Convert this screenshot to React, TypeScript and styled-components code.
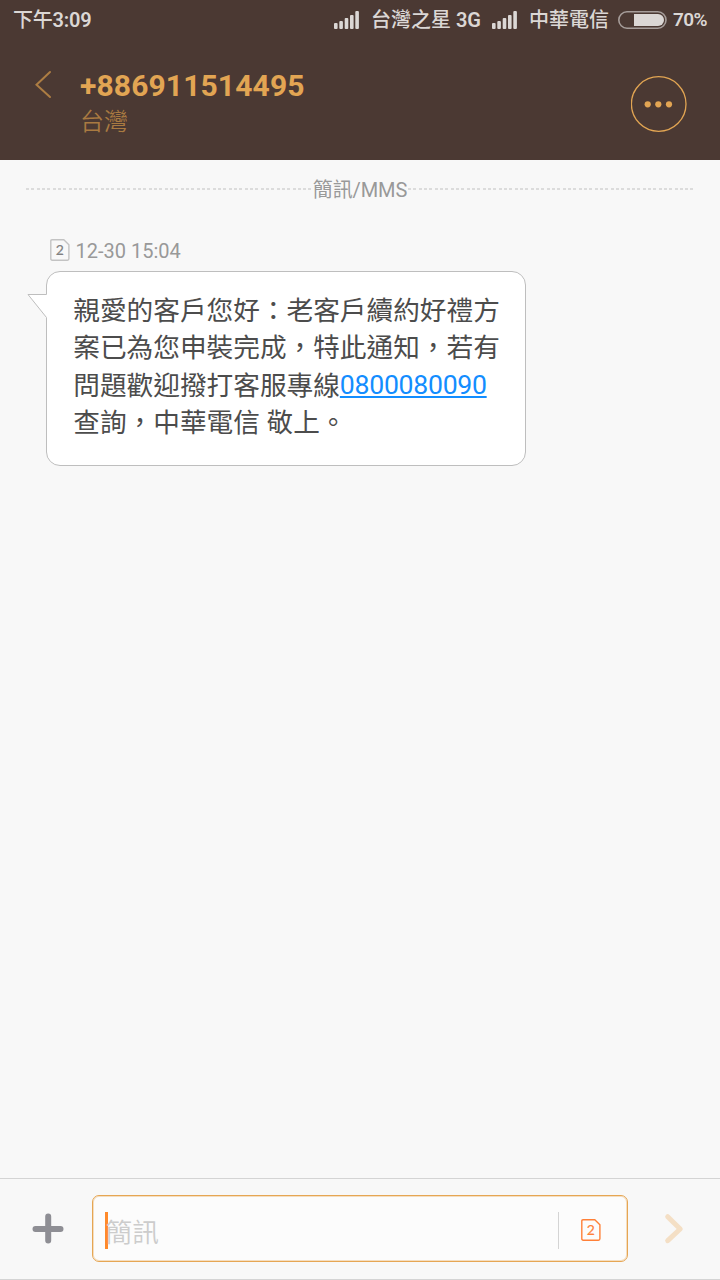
import React from "react";
import styled, { createGlobalStyle } from "styled-components";

const GlobalStyle = createGlobalStyle`
  * { box-sizing: border-box; }
  body {
    margin: 0;
    background: #f8f8f8;
    font-family: Roboto, "Noto Sans CJK TC", sans-serif;
  }
  svg { display: block; flex: none; }
`;

const Screen = styled.div`
  width: 720px;
  height: 1280px;
  display: flex;
  flex-direction: column;
  background: #f8f8f8;
  overflow: hidden;
`;

const Top = styled.header`
  height: 160px;
  background: #4b3933;
`;

const StatusBar = styled.div`
  height: 40px;
  display: flex;
  align-items: center;
  padding: 0 12px 0 13px;
  color: #dbd7d5;
  font-size: 20px;
  font-weight: 500;
  line-height: 38px;
  white-space: nowrap;
`;

const Latin = styled.span`
  font-weight: 600;
  letter-spacing: -0.2px;
`;

const Clock = styled.span`
  margin-right: auto;
  letter-spacing: -0.2px;
`;

const Carrier = styled.span<{ $width: number; $gap: number }>`
  width: ${(p) => p.$width}px;
  margin: 0 ${(p) => p.$gap}px 0 11px;
`;

const Percent = styled.span`
  width: 35px;
  margin-left: 6px;
  font-size: 19px;
  font-weight: 600;
  letter-spacing: -0.6px;
  line-height: 40px;
`;

const TitleBar = styled.div`
  height: 120px;
  display: flex;
  align-items: flex-start;
  padding: 0 33.5px 0 34px;
`;

const IconButton = styled.button<{ $top: number; $left?: number }>`
  margin: ${(p) => p.$top}px 0 0 ${(p) => p.$left ?? 0}px;
  padding: 0;
  border: 0;
  background: none;
`;

const Contact = styled.div`
  flex: 1;
  margin: 28px 0 0 28px;
  white-space: nowrap;
`;

const Phone = styled.h1`
  margin: 0;
  height: 36px;
  color: #e2a553;
  font-size: 30px;
  font-weight: 700;
  letter-spacing: 0.13px;
  line-height: 36px;
`;

const Region = styled.div`
  color: #a97a41;
  font-size: 24px;
  font-weight: 350;
  line-height: 36px;
`;

const Thread = styled.main`
  flex: 1;
  padding: 12px 27px 0 26px;
`;

const Divider = styled.div`
  height: 34px;
  display: flex;
  align-items: center;
  color: #999;
  font-size: 20px;
  line-height: 34px;
  white-space: nowrap;
`;

const DividerLabel = styled.span`
  flex: 1;
  padding-top: 2px;
  text-align: center;
  letter-spacing: -0.1px;
`;

const Dashes = styled.i<{ $width: number }>`
  width: ${(p) => p.$width}px;
  height: 2px;
  background: repeating-linear-gradient(90deg, #dcdcdc 0 3px, transparent 3px 5.33px);
`;

const Meta = styled.div`
  display: flex;
  align-items: center;
  height: 24px;
  margin: 32px 0 0 24px;
  color: #999;
  font-size: 20px;
`;

const Stamp = styled.time`
  margin-left: 5.5px;
  padding-top: 2px;
`;

const Bubble = styled.article`
  position: relative;
  width: 480px;
  height: 195px;
  margin: 9px 0 0 20px;
  padding: 21px 0 0 26.3px;
  border: 1px solid #bebebe;
  border-radius: 14px;
  background: #fff;
  color: #4c4c4c;
  font-size: 26.67px;
  line-height: 37.33px;
  white-space: nowrap;
`;

const Tail = styled.svg`
  position: absolute;
  left: -20px;
  top: 21px;
`;

const Line = styled.div`
  height: 37.33px;
`;

const PhoneLink = styled.a`
  color: #138dff;
  letter-spacing: -0.3px;
  line-height: 1;
  vertical-align: 1px;
  text-decoration: underline;
  text-decoration-thickness: 2px;
  text-underline-offset: 2px;
`;

const Composer = styled.footer`
  height: 102px;
  display: flex;
  align-items: flex-start;
  padding: 17px 0 0 32px;
  border-top: 1px solid #d4d4d4;
  border-bottom: 1px solid #d4d4d4;
`;

const Field = styled.div`
  width: 536px;
  height: 67px;
  margin: -1px 0 0 28px;
  display: flex;
  align-items: center;
  padding: 3px 26px 0 12px;
  border: 1px solid #e6a653;
  border-radius: 7px;
  background: #fcfcfc;
  box-shadow: inset 0 0 0 1px rgba(230, 166, 83, 0.35);
`;

const Caret = styled.i`
  width: 3px;
  height: 37px;
  background: #ff8a2b;
`;

const Placeholder = styled.span`
  flex: 1;
  margin: 5px 0 0 -2.5px;
  color: #ccc;
  font-size: 26.67px;
  font-weight: 350;
  line-height: 36px;
`;

const Separator = styled.i`
  width: 1px;
  height: 37px;
  margin-right: 22px;
  background: #d4d4d4;
`;

const Signal = () => (
  <svg width="26" height="18" viewBox="0 0 26 18" fill="#dbd7d5">
    <rect x="0" y="12" width="3.6" height="6" rx="1" />
    <rect x="5.3" y="10" width="3.6" height="8" rx="1" />
    <rect x="10.7" y="7" width="3.6" height="11" rx="1" />
    <rect x="16" y="4" width="3.6" height="14" rx="1" />
    <rect x="21.3" y="0" width="3.6" height="18" rx="1" />
  </svg>
);

const Battery = () => (
  <svg width="49" height="18" viewBox="0 0 49 18">
    <rect x=".8" y=".8" width="47.2" height="16.4" rx="8.2" fill="none" stroke="#a59c99" strokeWidth="1.6" />
    <path d="M16 3H40a6 6 0 0 1 0 12H16Z" fill="#dbd7d5" />
  </svg>
);

const SimIcon = ({ stroke, ink }: { stroke: string; ink: string }) => (
  <svg width="20" height="22" viewBox="0 0 20 22">
    <path
      d="M2 .8H13.8L18.9 5.8V19.8Q18.9 21.2 17.5 21.2H2.2Q.8 21.2 .8 19.8V2Q.8 .8 2 .8Z"
      fill="none"
      stroke={stroke}
      strokeWidth="1.4"
    />
    <text x="9.7" y="16" textAnchor="middle" fontFamily="Lato, sans-serif" fontSize="14" fontWeight="400" fill={ink} stroke={ink} strokeWidth=".15">
      2
    </text>
  </svg>
);

export default function App() {
  return (
    <>
      <GlobalStyle />
      <Screen>
        <Top>
          <StatusBar>
            <Clock>
              下午<Latin>3:09</Latin>
            </Clock>
            <Signal />
            <Carrier $width={109} $gap={12}>
              台灣之星 <Latin>3G</Latin>
            </Carrier>
            <Signal />
            <Carrier $width={79} $gap={10}>中華電信</Carrier>
            <Battery />
            <Percent>70%</Percent>
          </StatusBar>
          <TitleBar>
            <IconButton $top={30} aria-label="返回">
              <svg width="18" height="29" viewBox="0 0 18 29">
                <path d="M16 2L2.5 14.7L16 27" fill="none" stroke="#ad7d43" strokeWidth="2" strokeLinecap="round" />
              </svg>
            </IconButton>
            <Contact>
              <Phone>+886911514495</Phone>
              <Region>台灣</Region>
            </Contact>
            <IconButton $top={36} aria-label="更多">
              <svg width="56" height="56" viewBox="0 0 56 56" fill="#e2a553">
                <circle cx="27.7" cy="28" r="27.3" fill="none" stroke="#e2a553" strokeWidth="1.3" />
                <circle cx="16.7" cy="28.3" r="3.1" />
                <circle cx="27.3" cy="28.3" r="3.1" />
                <circle cx="38" cy="28.3" r="3.1" />
              </svg>
            </IconButton>
          </TitleBar>
        </Top>
        <Thread>
          <Divider>
            <Dashes $width={286} />
            <DividerLabel>簡訊/MMS</DividerLabel>
            <Dashes $width={285} />
          </Divider>
          <Meta>
            <SimIcon stroke="#c3c3c3" ink="#808080" />
            <Stamp>12-30 15:04</Stamp>
          </Meta>
          <Bubble>
            <Tail width="21" height="28" viewBox="0 0 21 28">
              <path d="M21 1.5H1L19.5 24.5L21 26Z" fill="#fff" />
              <path d="M19.5 1.5H1L19.5 24.5" fill="none" stroke="#bebebe" />
            </Tail>
            <Line>親愛的客戶您好：老客戶續約好禮方</Line>
            <Line>案已為您申裝完成，特此通知，若有</Line>
            <Line>
              問題歡迎撥打客服專線<PhoneLink>0800080090</PhoneLink>
            </Line>
            <Line>查詢，中華電信 敬上。</Line>
          </Bubble>
        </Thread>
        <Composer>
          <IconButton $top={17} aria-label="新增">
            <svg width="32" height="32" viewBox="0 0 32 32">
              <path d="M16.2 3.5V27.5M3.5 16H28.5" stroke="#8e8e94" strokeWidth="6" strokeLinecap="round" />
            </svg>
          </IconButton>
          <Field>
            <Caret />
            <Placeholder>簡訊</Placeholder>
            <Separator />
            <SimIcon stroke="#ff8038" ink="#ff8038" />
          </Field>
          <IconButton $top={17} $left={36} aria-label="傳送">
            <svg width="20" height="32" viewBox="0 0 20 32">
              <path d="M3.7 3.7L16.2 16L3.7 27.7" fill="none" stroke="#f4dfc5" strokeWidth="5" strokeLinecap="round" strokeLinejoin="round" />
            </svg>
          </IconButton>
        </Composer>
      </Screen>
    </>
  );
}
